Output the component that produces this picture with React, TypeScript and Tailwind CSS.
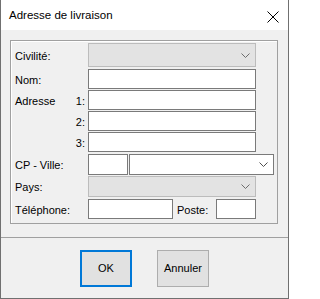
import { FC, ReactNode } from "react";

const Chevron: FC<{ color?: string }> = ({ color = "#606060" }) => (
  <svg width="9" height="5" viewBox="0 0 9 5" className="block">
    <polyline points="0.5,0.5 4.5,4.5 8.5,0.5" fill="none" stroke={color} strokeWidth="1" />
  </svg>
);

const TextBox: FC<{ className?: string }> = ({ className = "" }) => (
  <div className={`h-full bg-white border border-[#7a7a7a] ${className}`} />
);

const Combo: FC<{ disabled?: boolean; className?: string }> = ({ disabled, className = "" }) => (
  <div
    className={`h-full flex items-center justify-end pr-[5px] border ${
      disabled ? "bg-[#e3e3e3] border-[#bcbcbc]" : "bg-white border-[#7a7a7a]"
    } ${className}`}
  >
    <Chevron color={disabled ? "#6d6d6d" : "#505050"} />
  </div>
);

const Row: FC<{ label?: ReactNode; num?: string; className: string; children: ReactNode }> = ({
  label,
  num,
  className,
  children,
}) => (
  <div className={`flex items-center ${className}`}>
    <div className="w-[73px] shrink-0 flex justify-between pr-[3px] pt-[2px]">
      <span>{label}</span>
      {num && <span>{num}</span>}
    </div>
    {children}
  </div>
);

export default function App() {
  return (
    <div className="w-[289px] h-[299px] flex flex-col bg-[#f0f0f0] border-x border-b border-[#707070] font-['Liberation_Sans',Arial,sans-serif] text-[11px] leading-[13px] text-black">
      <div className="h-[30px] shrink-0 bg-white flex justify-between pl-[8px] pr-[9px]">
        <span className="pt-[8px] text-[11.5px] leading-[14px]">Adresse de livraison</span>
        <svg width="12" height="12" viewBox="0 0 12 12" className="block mt-[11px]">
          <path d="M0.5 0.5 L11.5 11.5 M11.5 0.5 L0.5 11.5" stroke="#000" strokeWidth="1" />
        </svg>
      </div>

      <div className="flex-1 flex flex-col">
        <div className="mt-[10px] ml-[9px] w-[268px] h-[184px] shrink-0 border border-[#a0a0a0] shadow-[inset_1px_1px_0_#ffffff] pl-[4px] flex flex-col">
          <Row label="Civilité:" className="mt-[2px] h-[24px]">
            <Combo disabled className="w-[168px]" />
          </Row>
          <Row label="Nom:" className="mt-[2px] h-[20px]">
            <TextBox className="w-[168px]" />
          </Row>
          <Row label="Adresse" num="1:" className="mt-[1px] h-[20px]">
            <TextBox className="w-[168px]" />
          </Row>
          <Row num="2:" className="mt-[1px] h-[20px]">
            <TextBox className="w-[168px]" />
          </Row>
          <Row num="3:" className="mt-[1px] h-[20px]">
            <TextBox className="w-[168px]" />
          </Row>
          <Row label="CP - Ville:" className="mt-[2px] h-[21px]">
            <TextBox className="w-[40px] h-[20px]" />
            <Combo className="ml-[1px] w-[145px]" />
          </Row>
          <Row label="Pays:" className="mt-[1px] h-[21px]">
            <Combo disabled className="w-[168px]" />
          </Row>
          <Row label="Téléphone:" className="mt-[2px] h-[20px]">
            <TextBox className="w-[85px]" />
            <span className="w-[43px] pl-[4px] pt-[2px]">Poste:</span>
            <TextBox className="w-[40px] border-[#1a1a1a]" />
          </Row>
        </div>

        <div className="mt-[13px] h-px bg-[#a0a0a0]" />

        <div className="flex pl-[79px] pt-[12px] gap-[25px]">
          <button className="w-[52px] h-[37px] border-2 border-[#0078d7] bg-[#e1e1e1] flex items-center justify-center">
            OK
          </button>
          <button className="w-[52px] h-[37px] border border-[#adadad] bg-[#e1e1e1] flex items-center justify-center">
            Annuler
          </button>
        </div>
      </div>
    </div>
  );
}
